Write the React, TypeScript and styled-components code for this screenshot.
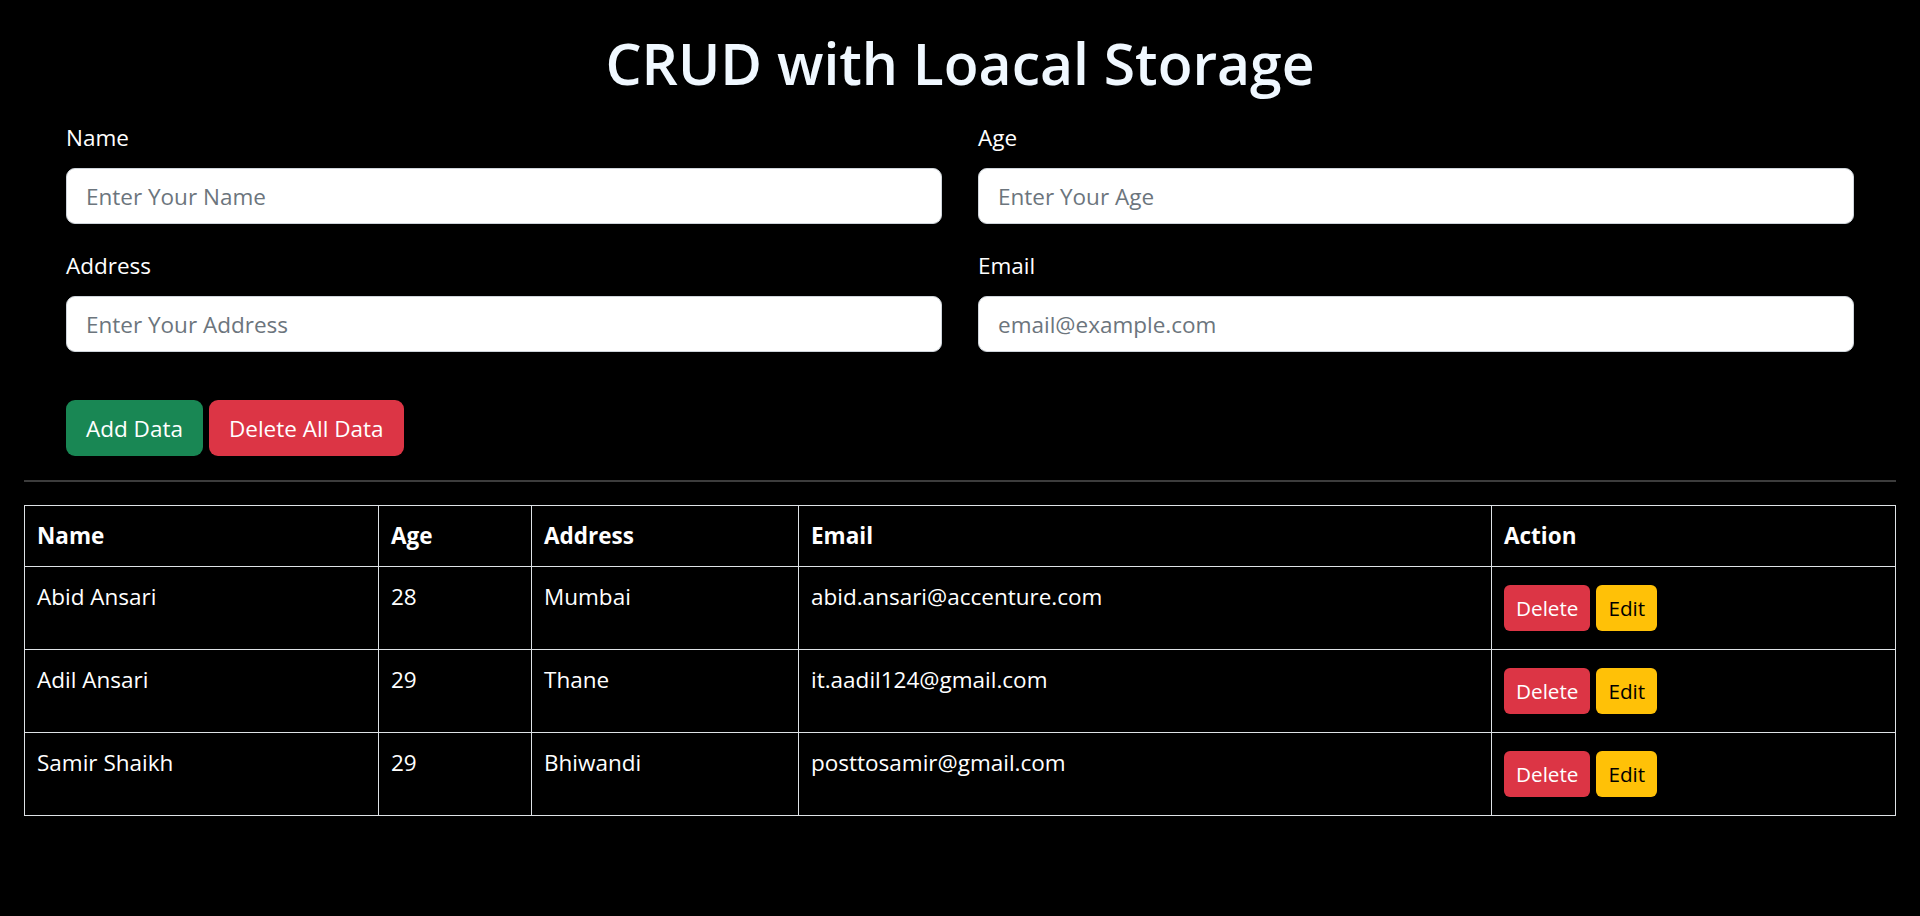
import React from "react";
import styled, { createGlobalStyle } from "styled-components";

const GlobalStyle = createGlobalStyle`
  html, body {
    margin: 0;
    padding: 0;
    background: #000;
  }
  body {
    font-family: "Open Sans", "Noto Sans", Arial, sans-serif;
    color: #fff;
    font-size: 22.5px;
  }
  * { box-sizing: border-box; }
`;

const Page = styled.div`
  padding: 27px 24px 40px;
`;

const Title = styled.h1`
  margin: 0 0 21px;
  text-align: center;
  font-size: 57px;
  font-weight: 600;
  line-height: 72px;
  color: #f0f8ff;
`;

const Form = styled.form`
  padding: 0 42px;
`;

const FieldGrid = styled.div`
  display: grid;
  grid-template-columns: 1fr 1fr;
  column-gap: 36px;
`;

const Field = styled.div`
  margin-bottom: 24px;
`;

const Label = styled.label`
  display: block;
  line-height: 36px;
  margin-bottom: 12px;
  font-size: 22.5px;
  color: #fff;
`;

const Input = styled.input`
  display: block;
  width: 100%;
  height: 56px;
  padding: 0 19px;
  border: 1px solid #ced4da;
  border-radius: 9px;
  background: #fff;
  font-family: inherit;
  font-size: 22.5px;
  color: #212529;
  outline: none;
  &::placeholder {
    color: #6c757d;
  }
`;

const Actions = styled.div`
  display: flex;
  gap: 6px;
  margin-top: 24px;
`;

const Button = styled.button<{ $variant: "success" | "danger" | "warning"; $small?: boolean }>`
  display: inline-flex;
  align-items: center;
  justify-content: center;
  height: ${(p) => (p.$small ? "46px" : "56px")};
  padding: ${(p) => (p.$small ? "0 12px" : "0 20px")};
  border: none;
  border-radius: ${(p) => (p.$small ? "6px" : "9px")};
  font-family: inherit;
  font-size: ${(p) => (p.$small ? "20.7px" : "22.5px")};
  cursor: pointer;
  background: ${(p) =>
    p.$variant === "success" ? "#198754" : p.$variant === "danger" ? "#dc3545" : "#ffc107"};
  color: ${(p) => (p.$variant === "warning" ? "#000" : "#fff")};
`;

const Divider = styled.hr`
  margin: 24px 0 23px;
  border: none;
  border-top: 2px solid #3c3c3c;
`;

const Table = styled.table`
  width: 100%;
  border-collapse: collapse;
  table-layout: fixed;
  border: 1px solid #dee2e6;
`;

const HeadCell = styled.th`
  text-align: left;
  padding: 12px;
  line-height: 36px;
  font-weight: 700;
  border: 1px solid #dee2e6;
  vertical-align: top;
`;

const Cell = styled.td`
  padding: 12px;
  line-height: 36px;
  border: 1px solid #dee2e6;
  vertical-align: top;
`;

const ActionGroup = styled.div`
  display: flex;
  gap: 6px;
  margin: 6px 0;
`;

const rows = [
  { name: "Abid Ansari", age: 28, address: "Mumbai", email: "abid.ansari@accenture.com" },
  { name: "Adil Ansari", age: 29, address: "Thane", email: "it.aadil124@gmail.com" },
  { name: "Samir Shaikh", age: 29, address: "Bhiwandi", email: "posttosamir@gmail.com" },
];

export default function App() {
  return (
    <>
      <GlobalStyle />
      <Page>
        <Title>CRUD with Loacal Storage</Title>
        <Form onSubmit={(e) => e.preventDefault()}>
          <FieldGrid>
            <Field>
              <Label>Name</Label>
              <Input placeholder="Enter Your Name" />
            </Field>
            <Field>
              <Label>Age</Label>
              <Input placeholder="Enter Your Age" />
            </Field>
            <Field>
              <Label>Address</Label>
              <Input placeholder="Enter Your Address" />
            </Field>
            <Field>
              <Label>Email</Label>
              <Input placeholder="email@example.com" />
            </Field>
          </FieldGrid>
          <Actions>
            <Button type="button" $variant="success">Add Data</Button>
            <Button type="button" $variant="danger">Delete All Data</Button>
          </Actions>
        </Form>
        <Divider />
        <Table>
          <colgroup>
            <col style={{ width: 354 }} />
            <col style={{ width: 153 }} />
            <col style={{ width: 267 }} />
            <col style={{ width: 693 }} />
            <col />
          </colgroup>
          <thead>
            <tr>
              <HeadCell>Name</HeadCell>
              <HeadCell>Age</HeadCell>
              <HeadCell>Address</HeadCell>
              <HeadCell>Email</HeadCell>
              <HeadCell>Action</HeadCell>
            </tr>
          </thead>
          <tbody>
            {rows.map((r) => (
              <tr key={r.email}>
                <Cell>{r.name}</Cell>
                <Cell>{r.age}</Cell>
                <Cell>{r.address}</Cell>
                <Cell>{r.email}</Cell>
                <Cell>
                  <ActionGroup>
                    <Button type="button" $variant="danger" $small>Delete</Button>
                    <Button type="button" $variant="warning" $small>Edit</Button>
                  </ActionGroup>
                </Cell>
              </tr>
            ))}
          </tbody>
        </Table>
      </Page>
    </>
  );
}
